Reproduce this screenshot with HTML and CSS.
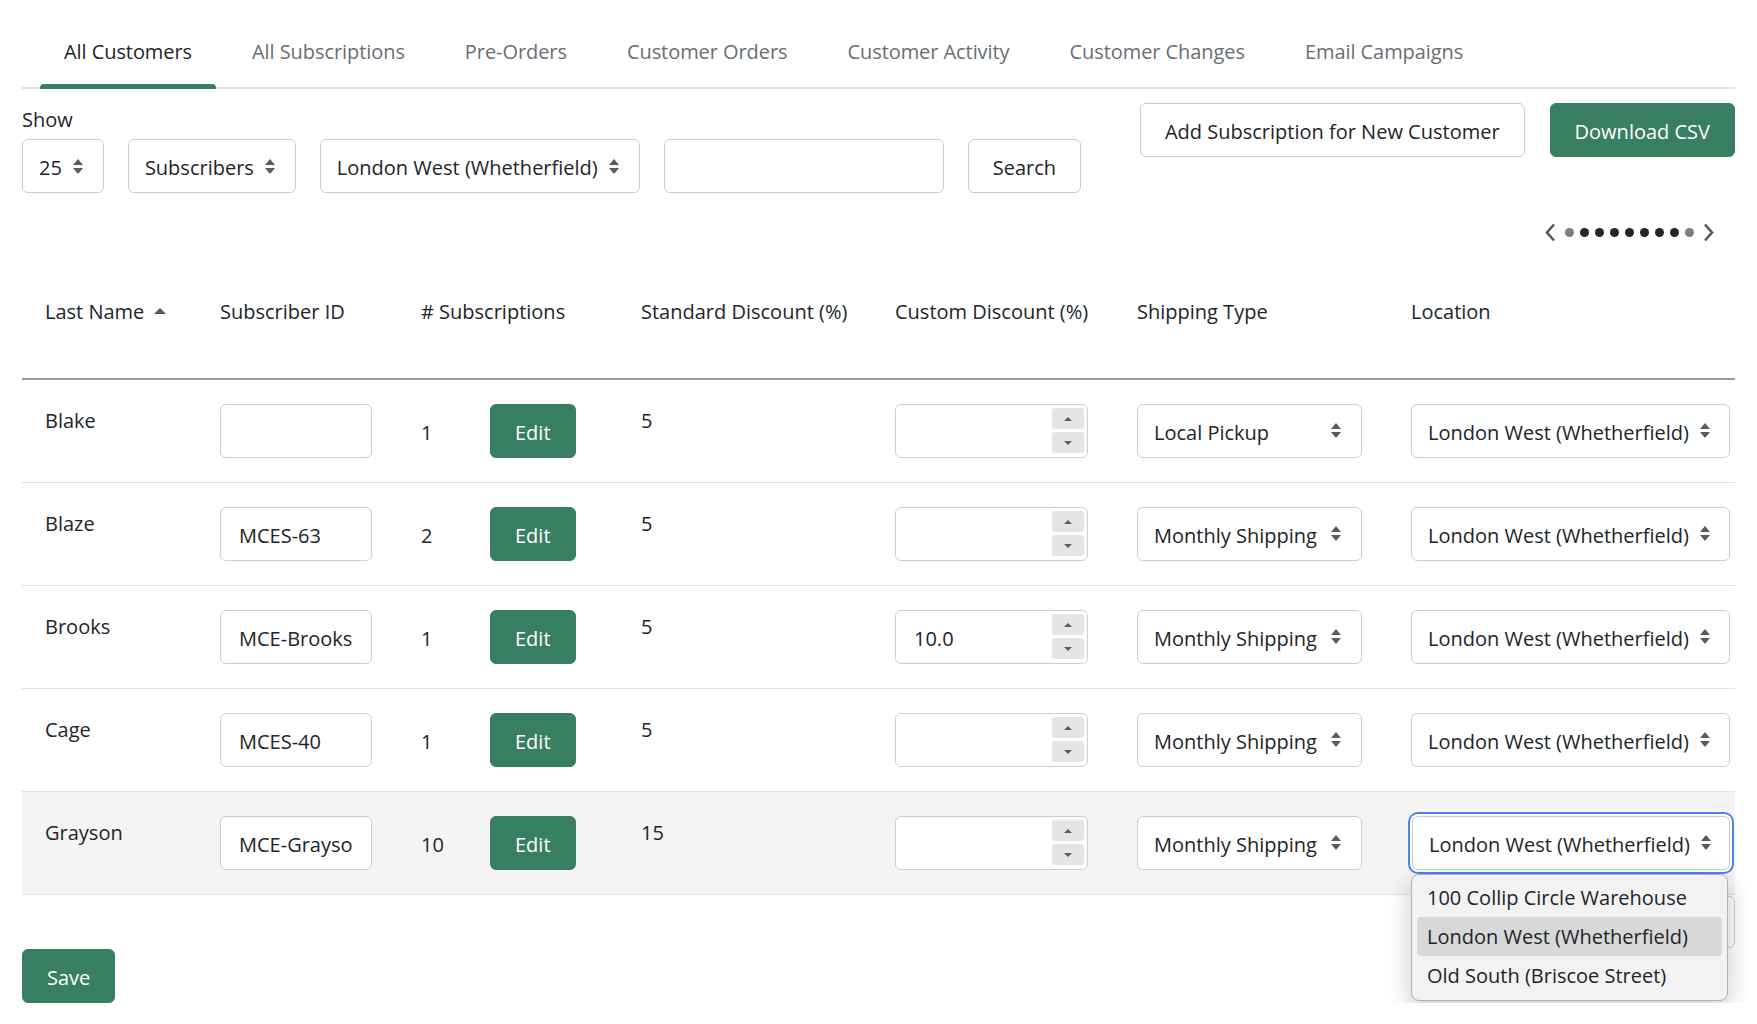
FILE: index.html
```html
<!DOCTYPE html>
<html lang="en">
<head>
<meta charset="utf-8">
<title>All Customers</title>
<link rel="stylesheet" href="styles.css">
</head>
<body>
<div class="page">
  <nav class="tabs">
    <a class="tab tab-active" href="#">All Customers</a>
    <a class="tab" href="#">All Subscriptions</a>
    <a class="tab" href="#">Pre-Orders</a>
    <a class="tab" href="#">Customer Orders</a>
    <a class="tab" href="#">Customer Activity</a>
    <a class="tab" href="#">Customer Changes</a>
    <a class="tab" href="#">Email Campaigns</a>
  </nav>

  <div class="toolbar">
    <div class="filters">
      <span class="filters-label">Show</span>
      <div class="controls">
        <div class="select"><span>25</span><svg class="arrows" viewBox="0 0 10 15"><polygon points="0,6 5,0 10,6"/><polygon points="0,9 5,15 10,9"/></svg></div>
        <div class="select"><span>Subscribers</span><svg class="arrows" viewBox="0 0 10 15"><polygon points="0,6 5,0 10,6"/><polygon points="0,9 5,15 10,9"/></svg></div>
        <div class="select"><span>London West (Whetherfield)</span><svg class="arrows" viewBox="0 0 10 15"><polygon points="0,6 5,0 10,6"/><polygon points="0,9 5,15 10,9"/></svg></div>
        <input class="field search-field" type="text" value="">
        <button class="btn btn-light">Search</button>
      </div>
    </div>
    <div class="actions">
      <button class="btn btn-light">Add Subscription for New Customer</button>
      <button class="btn btn-green">Download CSV</button>
    </div>
  </div>

  <div class="pager">
    <svg class="chev" viewBox="0 0 11 19"><polyline points="9,1.5 2,9.5 9,17.5"/></svg>
    <div class="dots">
      <span class="dot dot-dim"></span><span class="dot"></span><span class="dot"></span><span class="dot"></span><span class="dot"></span><span class="dot"></span><span class="dot"></span><span class="dot"></span><span class="dot dot-dim"></span>
    </div>
    <svg class="chev" viewBox="0 0 11 19"><polyline points="2,1.5 9,9.5 2,17.5"/></svg>
  </div>

  <table class="grid">
    <colgroup>
      <col class="c-name"><col class="c-id"><col class="c-count"><col class="c-std"><col class="c-custom"><col class="c-ship"><col class="c-loc">
    </colgroup>
    <thead>
      <tr>
        <th>Last Name <svg class="sort" viewBox="0 0 12 6"><polygon points="0,6 6,0 12,6"/></svg></th>
        <th>Subscriber ID</th>
        <th># Subscriptions</th>
        <th>Standard Discount (%)</th>
        <th>Custom Discount (%)</th>
        <th>Shipping Type</th>
        <th>Location</th>
      </tr>
    </thead>
    <tbody>
      <tr>
        <td>Blake</td>
        <td><input class="field id-field" type="text" value=""></td>
        <td><div class="count-cell"><span class="count">1</span><button class="btn btn-green">Edit</button></div></td>
        <td>5</td>
        <td><div class="num"><span></span><div class="spin"><span class="spin-btn"><svg viewBox="0 0 8 4"><polygon points="0,4 4,0 8,4"/></svg></span><span class="spin-btn"><svg viewBox="0 0 8 4"><polygon points="0,0 4,4 8,0"/></svg></span></div></div></td>
        <td><div class="select select-ship"><span>Local Pickup</span><svg class="arrows" viewBox="0 0 10 15"><polygon points="0,6 5,0 10,6"/><polygon points="0,9 5,15 10,9"/></svg></div></td>
        <td><div class="select select-loc"><span>London West (Whetherfield)</span><svg class="arrows" viewBox="0 0 10 15"><polygon points="0,6 5,0 10,6"/><polygon points="0,9 5,15 10,9"/></svg></div></td>
      </tr>
      <tr>
        <td>Blaze</td>
        <td><input class="field id-field" type="text" value="MCES-63"></td>
        <td><div class="count-cell"><span class="count">2</span><button class="btn btn-green">Edit</button></div></td>
        <td>5</td>
        <td><div class="num"><span></span><div class="spin"><span class="spin-btn"><svg viewBox="0 0 8 4"><polygon points="0,4 4,0 8,4"/></svg></span><span class="spin-btn"><svg viewBox="0 0 8 4"><polygon points="0,0 4,4 8,0"/></svg></span></div></div></td>
        <td><div class="select select-ship"><span>Monthly Shipping</span><svg class="arrows" viewBox="0 0 10 15"><polygon points="0,6 5,0 10,6"/><polygon points="0,9 5,15 10,9"/></svg></div></td>
        <td><div class="select select-loc"><span>London West (Whetherfield)</span><svg class="arrows" viewBox="0 0 10 15"><polygon points="0,6 5,0 10,6"/><polygon points="0,9 5,15 10,9"/></svg></div></td>
      </tr>
      <tr>
        <td>Brooks</td>
        <td><input class="field id-field" type="text" value="MCE-Brooks"></td>
        <td><div class="count-cell"><span class="count">1</span><button class="btn btn-green">Edit</button></div></td>
        <td>5</td>
        <td><div class="num"><span>10.0</span><div class="spin"><span class="spin-btn"><svg viewBox="0 0 8 4"><polygon points="0,4 4,0 8,4"/></svg></span><span class="spin-btn"><svg viewBox="0 0 8 4"><polygon points="0,0 4,4 8,0"/></svg></span></div></div></td>
        <td><div class="select select-ship"><span>Monthly Shipping</span><svg class="arrows" viewBox="0 0 10 15"><polygon points="0,6 5,0 10,6"/><polygon points="0,9 5,15 10,9"/></svg></div></td>
        <td><div class="select select-loc"><span>London West (Whetherfield)</span><svg class="arrows" viewBox="0 0 10 15"><polygon points="0,6 5,0 10,6"/><polygon points="0,9 5,15 10,9"/></svg></div></td>
      </tr>
      <tr>
        <td>Cage</td>
        <td><input class="field id-field" type="text" value="MCES-40"></td>
        <td><div class="count-cell"><span class="count">1</span><button class="btn btn-green">Edit</button></div></td>
        <td>5</td>
        <td><div class="num"><span></span><div class="spin"><span class="spin-btn"><svg viewBox="0 0 8 4"><polygon points="0,4 4,0 8,4"/></svg></span><span class="spin-btn"><svg viewBox="0 0 8 4"><polygon points="0,0 4,4 8,0"/></svg></span></div></div></td>
        <td><div class="select select-ship"><span>Monthly Shipping</span><svg class="arrows" viewBox="0 0 10 15"><polygon points="0,6 5,0 10,6"/><polygon points="0,9 5,15 10,9"/></svg></div></td>
        <td><div class="select select-loc"><span>London West (Whetherfield)</span><svg class="arrows" viewBox="0 0 10 15"><polygon points="0,6 5,0 10,6"/><polygon points="0,9 5,15 10,9"/></svg></div></td>
      </tr>
      <tr class="row-hover">
        <td>Grayson</td>
        <td><input class="field id-field" type="text" value="MCE-Grayso"></td>
        <td><div class="count-cell"><span class="count">10</span><button class="btn btn-green">Edit</button></div></td>
        <td>15</td>
        <td><div class="num"><span></span><div class="spin"><span class="spin-btn"><svg viewBox="0 0 8 4"><polygon points="0,4 4,0 8,4"/></svg></span><span class="spin-btn"><svg viewBox="0 0 8 4"><polygon points="0,0 4,4 8,0"/></svg></span></div></div></td>
        <td><div class="select select-ship"><span>Monthly Shipping</span><svg class="arrows" viewBox="0 0 10 15"><polygon points="0,6 5,0 10,6"/><polygon points="0,9 5,15 10,9"/></svg></div></td>
        <td>
          <div class="select-wrap">
            <div class="select select-loc select-focus"><span>London West (Whetherfield)</span><svg class="arrows" viewBox="0 0 10 15"><polygon points="0,6 5,0 10,6"/><polygon points="0,9 5,15 10,9"/></svg></div>
            <div class="dropdown">
              <div class="option">100 Collip Circle Warehouse</div>
              <div class="option option-selected">London West (Whetherfield)</div>
              <div class="option">Old South (Briscoe Street)</div>
            </div>
          </div>
        </td>
      </tr>
    </tbody>
  </table>

  <div class="after-table">
    <div class="ghost-box"></div>
  </div>
  <div class="save-row">
    <button class="btn btn-green">Save</button>
  </div>
</div>
</body>
</html>
```

FILE: styles.css
```css
* { box-sizing: border-box; }

body {
  margin: 0;
  font-family: "Open Sans", "Noto Sans", sans-serif;
  font-size: 20px;
  line-height: 33.6px;
  color: #212529;
  background: #ffffff;
}

.page {
  padding: 0 22px;
}

/* Tabs */
.tabs {
  display: flex;
  gap: 12px;
  padding-left: 18px;
  border-bottom: 2px solid #e3e3e3;
}

.tab {
  position: relative;
  padding: 35px 24px 18px;
  color: #6a6e73;
  text-decoration: none;
  white-space: nowrap;
  letter-spacing: -0.07px;
}

.tab-active {
  color: #212529;
}

.tab-active::after {
  content: "";
  position: absolute;
  left: 0;
  right: 0;
  bottom: -2px;
  height: 5px;
  background: #387e63;
  border-radius: 4px 4px 0 0;
}

/* Toolbar */
.toolbar {
  display: flex;
  justify-content: space-between;
  align-items: flex-start;
}

.filters {
  padding-top: 14px;
}

.filters-label {
  display: block;
}

.controls {
  display: flex;
  gap: 24px;
  margin-top: 3px;
}

.actions {
  display: flex;
  gap: 25px;
  margin-top: 14px;
}

.select {
  display: flex;
  align-items: center;
  gap: 11px;
  height: 54px;
  padding: 4px 20px 0 16px;
  border: 1px solid #cbced2;
  border-radius: 6px;
  background: #ffffff;
  white-space: nowrap;
}

.arrows {
  width: 10px;
  height: 15px;
  fill: #585b5f;
  flex: none;
  margin-top: -4px;
}

.field {
  height: 54px;
  border: 1px solid #cbced2;
  border-radius: 6px;
  padding: 4px 18px 0;
  font: inherit;
  color: #212529;
  background: #ffffff;
}

.search-field {
  width: 280px;
}

.btn {
  height: 54px;
  padding: 4px 24px 0;
  border-radius: 6px;
  font: inherit;
  cursor: pointer;
  white-space: nowrap;
}

.btn-light {
  background: #ffffff;
  border: 1px solid #c6c9cd;
  color: #212529;
}

.btn-green {
  background: #387e63;
  border: 1px solid #387e63;
  color: #ffffff;
}

/* Pager */
.pager {
  display: flex;
  justify-content: flex-end;
  align-items: center;
  gap: 9px;
  height: 24px;
  margin-top: 27px;
  padding-right: 21px;
}

.chev {
  width: 11px;
  height: 19px;
  fill: none;
  stroke: #555a5f;
  stroke-width: 2.6;
}

.dots {
  display: flex;
  gap: 6px;
}

.dot {
  width: 9px;
  height: 9px;
  border-radius: 50%;
  background: #222529;
}

.dot-dim {
  background: #7b7e82;
}

/* Table */
.grid {
  width: 100%;
  table-layout: fixed;
  border-collapse: collapse;
}

.c-name { width: 175px; }
.c-id { width: 201px; }
.c-count { width: 220px; }
.c-std { width: 254px; }
.c-custom { width: 242px; }
.c-ship { width: 274px; }
.c-loc { width: 347px; }

.grid th {
  text-align: left;
  font-weight: normal;
  padding: 51px 0 49px 23px;
  border-bottom: 2px solid #9a9a9a;
  vertical-align: top;
  white-space: nowrap;
}

.sort {
  width: 12px;
  height: 6px;
  fill: #555a5f;
  margin-left: 4px;
  vertical-align: 5px;
}

.grid td {
  padding: 24px 0 24px 23px;
  vertical-align: top;
  border-bottom: 1px solid #e1e2e3;
}

.row-hover td {
  background: #f4f4f4;
}

.id-field {
  width: 152px;
}

.count-cell {
  display: flex;
  align-items: center;
}

.count {
  width: 69px;
  padding-top: 4px;
}

.num {
  display: flex;
  align-items: center;
  justify-content: space-between;
  width: 193px;
  height: 54px;
  padding: 0 3px 0 18px;
  border: 1px solid #cbced2;
  border-radius: 6px;
  background: #ffffff;
}

.num > span:first-child {
  padding-top: 4px;
}

.spin {
  display: flex;
  flex-direction: column;
  gap: 3px;
}

.spin-btn {
  display: flex;
  align-items: center;
  justify-content: center;
  width: 32px;
  height: 21px;
  border-radius: 3px;
  background: #e5e5e7;
}

.spin-btn svg {
  width: 8px;
  height: 4px;
  fill: #5a5d61;
}

.select-ship {
  width: 225px;
  justify-content: space-between;
}

.select-loc {
  width: 319px;
  justify-content: space-between;
}

.select-wrap {
  position: relative;
}

.select-focus {
  width: 318px;
  margin-left: 1px;
  box-shadow: 0 0 0 2px #ffffff, 0 0 0 4px #4a85ee;
}

.dropdown {
  position: absolute;
  top: calc(100% + 4px);
  left: 0;
  width: 317px;
  padding: 3px 5px 5px;
  background: #f2f2f2;
  border: 1px solid #b1b1b1;
  border-radius: 8px;
  box-shadow: 0 8px 26px rgba(0, 0, 0, 0.22);
  z-index: 10;
}

.option {
  height: 39px;
  line-height: 39px;
  padding-left: 10px;
  border-radius: 4px;
  white-space: nowrap;
}

.option-selected {
  background: #d8d8d8;
}

/* Footer */
.after-table {
  display: flex;
  justify-content: flex-end;
  padding-top: 1px;
}

.ghost-box {
  width: 240px;
  height: 52px;
  border: 1px solid #cbced2;
  border-radius: 6px;
}

.save-row {
  margin-top: 1px;
}
```
